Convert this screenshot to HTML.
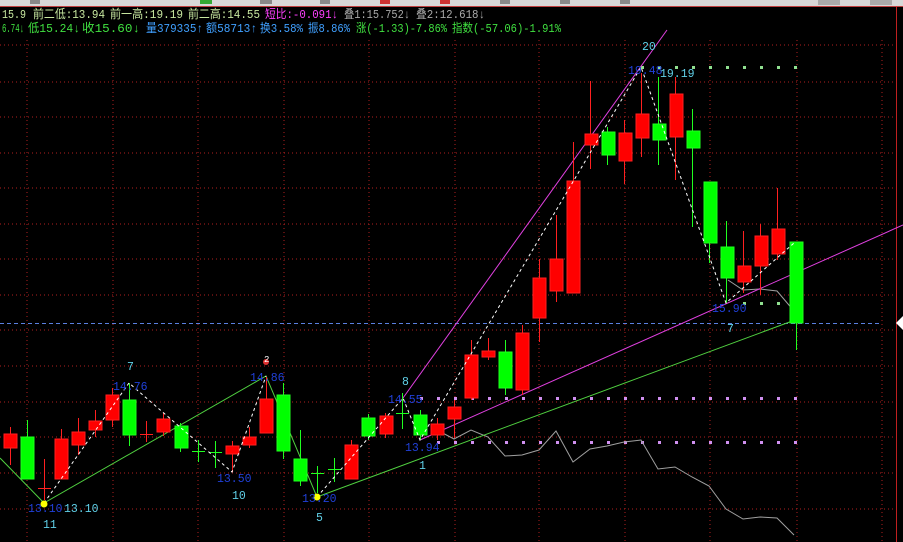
<!DOCTYPE html>
<html><head><meta charset="utf-8"><style>
html,body{margin:0;padding:0;background:#000;width:903px;height:542px;overflow:hidden}
svg{display:block}
.t{font-family:"Liberation Mono","WenQuanYi Zen Hei","Noto Sans CJK SC",monospace;font-size:12px}
.l{font-family:"Liberation Mono",monospace;font-size:11.5px}
</style></head><body>
<svg width="903" height="542" viewBox="0 0 903 542" xmlns="http://www.w3.org/2000/svg">
<rect width="903" height="542" fill="#000"/>
<rect x="0" y="0" width="903" height="6" fill="#d8d8d8"/>
<rect x="0" y="6" width="903" height="1" fill="#c04040"/>
<g fill="#888"><rect x="30" y="0" width="10" height="4"/><rect x="200" y="0" width="12" height="4" fill="#3a3"/><rect x="260" y="0" width="12" height="4"/><rect x="320" y="0" width="10" height="4"/><rect x="380" y="0" width="10" height="4" fill="#c33"/><rect x="440" y="0" width="10" height="4" fill="#c33"/><rect x="500" y="0" width="10" height="4"/><rect x="560" y="0" width="10" height="4"/><rect x="620" y="0" width="10" height="4"/><rect x="818" y="0" width="22" height="5" fill="#aaa"/><rect x="870" y="0" width="22" height="5" fill="#aaa"/></g>
<g stroke="#b02020" stroke-width="1" stroke-dasharray="1,3">
<line x1="0" y1="45" x2="895" y2="45"/><line x1="0" y1="82" x2="895" y2="82"/><line x1="0" y1="117" x2="895" y2="117"/><line x1="0" y1="153" x2="895" y2="153"/><line x1="0" y1="188" x2="895" y2="188"/><line x1="0" y1="224" x2="895" y2="224"/><line x1="0" y1="259" x2="895" y2="259"/><line x1="0" y1="295" x2="895" y2="295"/><line x1="0" y1="330" x2="895" y2="330"/><line x1="0" y1="366" x2="895" y2="366"/><line x1="0" y1="402" x2="895" y2="402"/><line x1="0" y1="437" x2="895" y2="437"/><line x1="0" y1="473" x2="895" y2="473"/><line x1="0" y1="509" x2="895" y2="509"/>
<line x1="27" y1="40" x2="27" y2="542"/><line x1="113" y1="40" x2="113" y2="542"/><line x1="198" y1="40" x2="198" y2="542"/><line x1="284" y1="40" x2="284" y2="542"/><line x1="369" y1="40" x2="369" y2="542"/><line x1="455" y1="40" x2="455" y2="542"/><line x1="539" y1="40" x2="539" y2="542"/><line x1="625" y1="40" x2="625" y2="542"/><line x1="710" y1="40" x2="710" y2="542"/><line x1="797" y1="40" x2="797" y2="542"/><line x1="882" y1="40" x2="882" y2="542"/>
</g>
<line x1="896.5" y1="7" x2="896.5" y2="542" stroke="#c02020" stroke-width="1"/>
<polygon points="903,316 896,323 903,330" fill="#fff"/>
<line x1="0" y1="323.5" x2="880" y2="323.5" stroke="#5a80e0" stroke-dasharray="4,3"/>
<g fill="#d090f0">
<rect x="420" y="397" width="3" height="3"/><rect x="437" y="397" width="3" height="3"/><rect x="454" y="397" width="3" height="3"/><rect x="471" y="397" width="3" height="3"/><rect x="488" y="397" width="3" height="3"/><rect x="505" y="397" width="3" height="3"/><rect x="522" y="397" width="3" height="3"/><rect x="539" y="397" width="3" height="3"/><rect x="556" y="397" width="3" height="3"/><rect x="573" y="397" width="3" height="3"/><rect x="590" y="397" width="3" height="3"/><rect x="607" y="397" width="3" height="3"/><rect x="624" y="397" width="3" height="3"/><rect x="641" y="397" width="3" height="3"/><rect x="658" y="397" width="3" height="3"/><rect x="675" y="397" width="3" height="3"/><rect x="692" y="397" width="3" height="3"/><rect x="709" y="397" width="3" height="3"/><rect x="726" y="397" width="3" height="3"/><rect x="743" y="397" width="3" height="3"/><rect x="760" y="397" width="3" height="3"/><rect x="777" y="397" width="3" height="3"/><rect x="794" y="397" width="3" height="3"/>
<rect x="437" y="441" width="3" height="3"/><rect x="454" y="441" width="3" height="3"/><rect x="471" y="441" width="3" height="3"/><rect x="488" y="441" width="3" height="3"/><rect x="505" y="441" width="3" height="3"/><rect x="522" y="441" width="3" height="3"/><rect x="539" y="441" width="3" height="3"/><rect x="556" y="441" width="3" height="3"/><rect x="573" y="441" width="3" height="3"/><rect x="590" y="441" width="3" height="3"/><rect x="607" y="441" width="3" height="3"/><rect x="624" y="441" width="3" height="3"/><rect x="641" y="441" width="3" height="3"/><rect x="658" y="441" width="3" height="3"/><rect x="675" y="441" width="3" height="3"/><rect x="692" y="441" width="3" height="3"/><rect x="709" y="441" width="3" height="3"/><rect x="726" y="441" width="3" height="3"/><rect x="743" y="441" width="3" height="3"/><rect x="760" y="441" width="3" height="3"/><rect x="777" y="441" width="3" height="3"/><rect x="794" y="441" width="3" height="3"/>
</g>
<g fill="#90e090"><rect x="641" y="66" width="3" height="3"/><rect x="658" y="66" width="3" height="3"/><rect x="675" y="66" width="3" height="3"/><rect x="692" y="66" width="3" height="3"/><rect x="709" y="66" width="3" height="3"/><rect x="726" y="66" width="3" height="3"/><rect x="743" y="66" width="3" height="3"/><rect x="760" y="66" width="3" height="3"/><rect x="777" y="66" width="3" height="3"/><rect x="794" y="66" width="3" height="3"/>
<rect x="743" y="302" width="3" height="3"/><rect x="760" y="302" width="3" height="3"/><rect x="777" y="302" width="3" height="3"/><rect x="794" y="302" width="3" height="3"/></g>
<polyline fill="none" stroke="#a0a0a0" points="437,430 454,439 471,430 488,437 505,456 522,455 539,450 556,431 573,462 590,449 607,446 624,442 641,440 658,469 675,467 692,477 709,486 726,509 743,519 760,517 777,518 794,535"/>
<polyline fill="none" stroke="#a0a0a0" points="728,280 743,290 760,289 777,291 794,311"/>
<line x1="403" y1="398" x2="667" y2="30" stroke="#e040e0"/>
<line x1="420" y1="440" x2="903" y2="225" stroke="#e040e0"/>
<polyline fill="none" stroke="#50d040" points="0,458 44,503 266,376 317,497 795,320"/>
<g stroke-width="1">
<g stroke="#ff2020" fill="#ff0000">
<line x1="10.5" y1="427" x2="10.5" y2="465"/><rect x="4" y="434" width="13" height="14"/>
<line x1="44.5" y1="459" x2="44.5" y2="500"/><line x1="38" y1="488.5" x2="51" y2="488.5"/>
<line x1="61.5" y1="429" x2="61.5" y2="440"/><rect x="55" y="439" width="13" height="40"/>
<line x1="78.5" y1="418" x2="78.5" y2="455"/><rect x="72" y="432" width="13" height="13"/>
<line x1="95.5" y1="410" x2="95.5" y2="437"/><rect x="89" y="421" width="13" height="9"/>
<line x1="112.5" y1="388" x2="112.5" y2="427"/><rect x="106" y="395" width="13" height="25"/>
<line x1="146.5" y1="421" x2="146.5" y2="442"/><line x1="140" y1="434.5" x2="153" y2="434.5"/>
<line x1="163.5" y1="413" x2="163.5" y2="436"/><rect x="157" y="419" width="13" height="13"/>
<line x1="232.5" y1="441" x2="232.5" y2="472"/><rect x="226" y="446" width="13" height="8"/>
<line x1="249.5" y1="427" x2="249.5" y2="448"/><rect x="243" y="437" width="13" height="8"/>
<line x1="266.5" y1="377" x2="266.5" y2="433"/><rect x="260" y="399" width="13" height="34"/>
<line x1="351.5" y1="440" x2="351.5" y2="479"/><rect x="345" y="445" width="13" height="34"/>
<line x1="385.5" y1="413" x2="385.5" y2="438"/><rect x="380" y="416" width="13" height="18"/>
<line x1="437.5" y1="418" x2="437.5" y2="440"/><rect x="431" y="424" width="13" height="11"/>
<line x1="454.5" y1="400" x2="454.5" y2="438"/><rect x="448" y="407" width="13" height="12"/>
<line x1="471.5" y1="340" x2="471.5" y2="400"/><rect x="465" y="355" width="13" height="43"/>
<line x1="488.5" y1="338" x2="488.5" y2="360"/><rect x="482" y="351" width="13" height="6"/>
<line x1="522.5" y1="325" x2="522.5" y2="395"/><rect x="516" y="333" width="13" height="57"/>
<line x1="539.5" y1="259" x2="539.5" y2="342"/><rect x="533" y="278" width="13" height="40"/>
<line x1="556.5" y1="215" x2="556.5" y2="302"/><rect x="550" y="259" width="13" height="32"/>
<line x1="573.5" y1="142" x2="573.5" y2="293"/><rect x="567" y="181" width="13" height="112"/>
<line x1="590.5" y1="81" x2="590.5" y2="169"/><rect x="585" y="134" width="13" height="11"/>
<line x1="624.5" y1="120" x2="624.5" y2="184"/><rect x="619" y="133" width="13" height="28"/>
<line x1="641.5" y1="73" x2="641.5" y2="157"/><rect x="636" y="114" width="13" height="24"/>
<line x1="675.5" y1="77" x2="675.5" y2="180"/><rect x="670" y="94" width="13" height="43"/>
<line x1="743.5" y1="231" x2="743.5" y2="293"/><rect x="738" y="266" width="13" height="16"/>
<line x1="760.5" y1="224" x2="760.5" y2="295"/><rect x="755" y="236" width="13" height="30"/>
<line x1="777.5" y1="188" x2="777.5" y2="260"/><rect x="772" y="229" width="13" height="25"/>
</g>
<g stroke="#20ff20" fill="#00ff00">
<line x1="27.5" y1="420" x2="27.5" y2="479"/><rect x="21" y="437" width="13" height="42"/>
<line x1="129.5" y1="383" x2="129.5" y2="446"/><rect x="123" y="400" width="13" height="35"/>
<line x1="180.5" y1="423" x2="180.5" y2="452"/><rect x="175" y="426" width="13" height="22"/>
<line x1="198.5" y1="440" x2="198.5" y2="462"/><line x1="192" y1="451.5" x2="205" y2="451.5"/>
<line x1="215.5" y1="441" x2="215.5" y2="468"/><line x1="209" y1="452.5" x2="222" y2="452.5"/>
<line x1="283.5" y1="383" x2="283.5" y2="459"/><rect x="277" y="395" width="13" height="56"/>
<line x1="300.5" y1="430" x2="300.5" y2="486"/><rect x="294" y="459" width="13" height="22"/>
<line x1="317.5" y1="466" x2="317.5" y2="493"/><line x1="311" y1="473.5" x2="324" y2="473.5"/>
<line x1="334.5" y1="458" x2="334.5" y2="482"/><line x1="328" y1="469.5" x2="341" y2="469.5"/>
<line x1="368.5" y1="414" x2="368.5" y2="440"/><rect x="362" y="418" width="13" height="18"/>
<line x1="402.5" y1="393" x2="402.5" y2="429"/><line x1="396" y1="413.5" x2="409" y2="413.5"/>
<line x1="420.5" y1="410" x2="420.5" y2="440"/><rect x="414" y="415" width="13" height="20"/>
<line x1="505.5" y1="340" x2="505.5" y2="395"/><rect x="499" y="352" width="13" height="36"/>
<line x1="607.5" y1="127" x2="607.5" y2="165"/><rect x="602" y="132" width="13" height="23"/>
<line x1="658.5" y1="77" x2="658.5" y2="165"/><rect x="653" y="124" width="13" height="16"/>
<line x1="692.5" y1="109" x2="692.5" y2="227"/><rect x="687" y="131" width="13" height="17"/>
<line x1="709.5" y1="182" x2="709.5" y2="263"/><rect x="704" y="182" width="13" height="61"/>
<line x1="726.5" y1="221" x2="726.5" y2="303"/><rect x="721" y="247" width="13" height="31"/>
<line x1="796.5" y1="242" x2="796.5" y2="350"/><rect x="790" y="242" width="13" height="81"/>
</g>
</g>
<polyline fill="none" stroke="#fff" stroke-dasharray="3,3" points="44,503 129,383 232,472 266,376"/>
<polyline fill="none" stroke="#fff" stroke-dasharray="3,3" points="317,497 403,398 420,440 641,67 726,303 794,243"/>
<circle cx="44" cy="504" r="3.5" fill="#ffff00"/>
<circle cx="317" cy="497" r="3.5" fill="#ffff00"/>
<circle cx="266" cy="362" r="3" fill="#e03030"/>
<g class="l" fill="#2040d8">
<text x="628" y="74">19.48</text><text x="113" y="390">14.76</text><text x="250" y="381">14.86</text>
<text x="217" y="482">13.50</text><text x="28" y="512">13.10</text><text x="302" y="502">13.20</text>
<text x="388" y="403">14.55</text><text x="405" y="451">13.94</text><text x="712" y="312">15.90</text>
</g>
<g class="l" fill="#60d0e8">
<text x="642" y="50">20</text><text x="660" y="77">19.19</text><text x="64" y="512">13.10</text>
<text x="127" y="370">7</text><text x="264" y="362" fill="#fff" font-size="9">2</text>
<text x="232" y="499">10</text><text x="43" y="528">11</text><text x="316" y="521">5</text>
<text x="402" y="385">8</text><text x="419" y="469">1</text><text x="727" y="332">7</text>
</g>
<g class="t">
<text x="2" y="18" fill="#c8e8a0" textLength="24" lengthAdjust="spacingAndGlyphs">15.9</text>
<text x="33" y="18" fill="#c8e8a0" textLength="72" lengthAdjust="spacingAndGlyphs">前二低:13.94</text>
<text x="110" y="18" fill="#c8e8a0" textLength="73" lengthAdjust="spacingAndGlyphs">前一高:19.19</text>
<text x="188" y="18" fill="#c8e8a0" textLength="72" lengthAdjust="spacingAndGlyphs">前二高:14.55</text>
<text x="265" y="18" fill="#ff40ff" textLength="73" lengthAdjust="spacingAndGlyphs">短比:-0.091↓</text>
<text x="344" y="18" fill="#a8a8a8" textLength="66" lengthAdjust="spacingAndGlyphs">叠1:15.752↓</text>
<text x="416" y="18" fill="#a8a8a8" textLength="69" lengthAdjust="spacingAndGlyphs">叠2:12.618↓</text>
<text x="2" y="32" fill="#40e040" textLength="22" lengthAdjust="spacingAndGlyphs">6.74↓</text>
<text x="28" y="32" fill="#40e040" textLength="52" lengthAdjust="spacingAndGlyphs">低15.24↓</text>
<text x="82" y="32" fill="#40e040" textLength="58" lengthAdjust="spacingAndGlyphs">收15.60↓</text>
<text x="146" y="32" fill="#40a0ff" textLength="57" lengthAdjust="spacingAndGlyphs">量379335↑</text>
<text x="206" y="32" fill="#40a0ff" textLength="51" lengthAdjust="spacingAndGlyphs">额58713↑</text>
<text x="260" y="32" fill="#40a0ff" textLength="43" lengthAdjust="spacingAndGlyphs">换3.58%</text>
<text x="308" y="32" fill="#40a0ff" textLength="42" lengthAdjust="spacingAndGlyphs">振8.86%</text>
<text x="356" y="32" fill="#40e040" textLength="91" lengthAdjust="spacingAndGlyphs">涨(-1.33)-7.86%</text>
<text x="452" y="32" fill="#40e040" textLength="109" lengthAdjust="spacingAndGlyphs">指数(-57.06)-1.91%</text>
</g>
</svg>
</body></html>
